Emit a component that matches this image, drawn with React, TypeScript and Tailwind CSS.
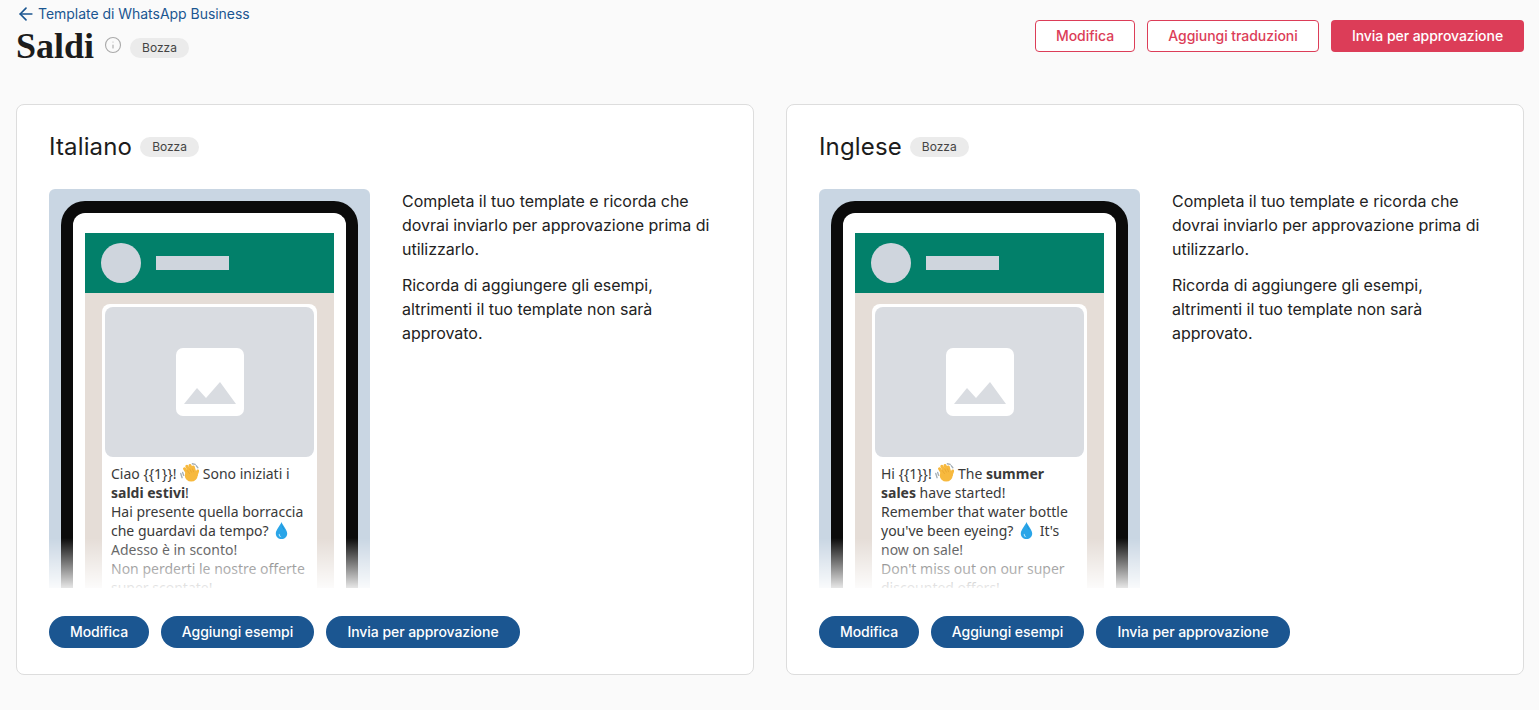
import React from 'react';
import { ArrowLeft, Info } from 'lucide-react';

function Badge() {
  return (
    <span className="inline-flex h-5 items-center rounded-full bg-[#ebebeb] px-3 text-xs leading-none text-[#444444]">
      Bozza
    </span>
  );
}

function WaveEmoji() {
  return (
    <svg viewBox="0 0 20 20" className="inline-block h-[19px] w-[19px] align-[-3px]">
      <path d="M13 0.8 L16 1.4 M17 2.8 L18.8 5 M0.8 11 L2.2 15.5 M2.8 10 L3.8 13" stroke="#a3aeb5" strokeWidth="1.4" strokeLinecap="round" fill="none" />
      <ellipse cx="11.8" cy="13" rx="6.8" ry="6.6" fill="#f7b93e" />
      <path d="M8.5 12 L4.8 6 M10.8 10 L7.2 3.4 M13.4 9.6 L10.6 2.6 M15.6 10 L14 4.2 M17 13 L18.6 8.4" stroke="#f7b93e" strokeWidth="3.1" strokeLinecap="round" fill="none" />
      <path d="M7.6 7.8 L10 11.2 M10.4 6.4 L12 9.6 M13.2 6.2 L14.2 9.2" stroke="#e09a26" strokeWidth="0.5" strokeLinecap="round" fill="none" />
    </svg>
  );
}

function DropEmoji() {
  return (
    <svg viewBox="0 0 20 20" className="inline-block h-[19px] w-[19px] align-[-4px]">
      <path d="M10 1 C11.4 5 16 9 16 13.2 C16 16.8 13.3 19 10 19 C6.7 19 4 16.8 4 13.2 C4 9 8.6 5 10 1 Z" fill="#2aa5e8" />
      <path d="M7 14 C7 16 8.5 17 10 17 C8.8 16 8.2 15 8 13.4 Z" fill="#b5e6fb" />
      <path d="M10 3 C10.6 5.6 12.6 7.6 13.4 10 C12 8.4 10.4 6.6 10 3 Z" fill="#1387cf" />
    </svg>
  );
}

function PhonePreview({ children }: { children: React.ReactNode }) {
  return (
    <div className="relative h-[399px] w-[321px] shrink-0 overflow-hidden rounded-t-md bg-[#c9d6e3] px-3 pt-3">
      <div className="h-[420px] rounded-t-[24px] border-x-12 border-t-12 border-[#0b0b0b] bg-white px-3 pt-5">
        <div className="flex h-[60px] items-center gap-[15px] bg-[#02806a] pl-4">
          <div className="h-10 w-10 rounded-full bg-[#cfd5dd]" />
          <div className="h-[14px] w-[73px] bg-[#cfd5dd]" />
        </div>
        <div className="h-[400px] bg-[#e5ddd7] pl-[17px] pr-[17px] pt-[11px]">
          <div className="h-[380px] rounded-t-lg bg-white p-[3px]">
            <div className="flex h-[150px] items-center justify-center rounded-lg bg-[#d9dce1]">
              <div className="flex h-[68px] w-[68px] items-end justify-center rounded-[7px] bg-white pb-[12px]">
                <svg viewBox="0 0 52 22" className="h-[22px] w-[52px]">
                  <path d="M0 22 L13 6 L22 16 L36 0 L52 22 Z" fill="#d9dce1" />
                </svg>
              </div>
            </div>
            <div className="px-[6px] pt-1.5 font-['Noto_Sans',sans-serif] text-sm leading-[19px] text-[#3a3a3a]">
              {children}
            </div>
          </div>
        </div>
      </div>
      {/* fade out over the bottom of the phone */}
      <div className="absolute inset-x-0 bottom-0 h-[50px] bg-gradient-to-b from-white/0 to-white/90" />
    </div>
  );
}

function LanguageCard({ title, children }: { title: string; children: React.ReactNode }) {
  return (
    <div className="flex-1 rounded-lg border border-[#dddddd] bg-white px-8 pb-[26px] pt-6">
      <div className="flex h-9 items-center gap-2">
        <h2 className="text-2xl leading-9 tracking-[0.15px] text-[#1c1c1c]">{title}</h2>
        <Badge />
      </div>
      <div className="mt-6 flex gap-8">
        <PhonePreview>{children}</PhonePreview>
        <div className="flex flex-col gap-3 text-base leading-6 tracking-[-0.03px] text-[#222222]">
          <p>Completa il tuo template e ricorda che dovrai inviarlo per approvazione prima di utilizzarlo.</p>
          <p>Ricorda di aggiungere gli esempi, altrimenti il tuo template non sarà approvato.</p>
        </div>
      </div>
      <div className="mt-7 flex gap-3 text-sm font-medium tracking-[-0.05px] text-white">
        <button className="h-8 w-[100px] rounded-full bg-[#1b5691]">Modifica</button>
        <button className="h-8 w-[153px] rounded-full bg-[#1b5691]">Aggiungi esempi</button>
        <button className="h-8 w-[194px] rounded-full bg-[#1b5691]">Invia per approvazione</button>
      </div>
    </div>
  );
}

export default function App() {
  return (
    <div className="min-h-screen bg-[#fafafa] pl-4 pr-[15px] font-['Inter',sans-serif]">
      <div className="flex items-start justify-between">
        <div>
          <a className="flex h-7 items-center gap-0.5 text-sm tracking-[-0.03px] text-[#1b5691]">
            <ArrowLeft className="h-5 w-5" />
            Template di WhatsApp Business
          </a>
          <div className="flex h-9 items-center">
            <h1 className="font-['Liberation_Serif',serif] text-[36px] font-bold leading-9 text-[#1c1c1c]">Saldi</h1>
            <Info className="mb-0.5 ml-2.5 h-[18px] w-[18px] text-[#aaaaaa]" strokeWidth={1.5} />
            <span className="ml-2">
              <Badge />
            </span>
          </div>
        </div>
        <div className="mt-5 flex gap-3 text-sm font-medium tracking-[-0.05px]">
          <button className="h-8 w-[100px] rounded border border-[#dc3d58] bg-white text-[#dc3d58]">Modifica</button>
          <button className="h-8 w-[172px] rounded border border-[#dc3d58] bg-white text-[#dc3d58]">
            Aggiungi traduzioni
          </button>
          <button className="h-8 w-[193px] rounded bg-[#dc3d58] text-white">Invia per approvazione</button>
        </div>
      </div>
      <div className="mt-10 flex gap-8">
        <LanguageCard title="Italiano">
          Ciao {'{{1}}'}! <WaveEmoji /> Sono iniziati i <b>saldi estivi</b>!<br />
          Hai presente quella borraccia che guardavi da tempo? <DropEmoji />
          <br />
          Adesso è in sconto!
          <br />
          Non perderti le nostre offerte super scontate!
        </LanguageCard>
        <LanguageCard title="Inglese">
          Hi {'{{1}}'}! <WaveEmoji /> The <b>summer sales</b> have started!<br />
          Remember that water bottle you've been eyeing? <DropEmoji /> It's now on sale!
          <br />
          Don't miss out on our super discounted offers!
        </LanguageCard>
      </div>
    </div>
  );
}
